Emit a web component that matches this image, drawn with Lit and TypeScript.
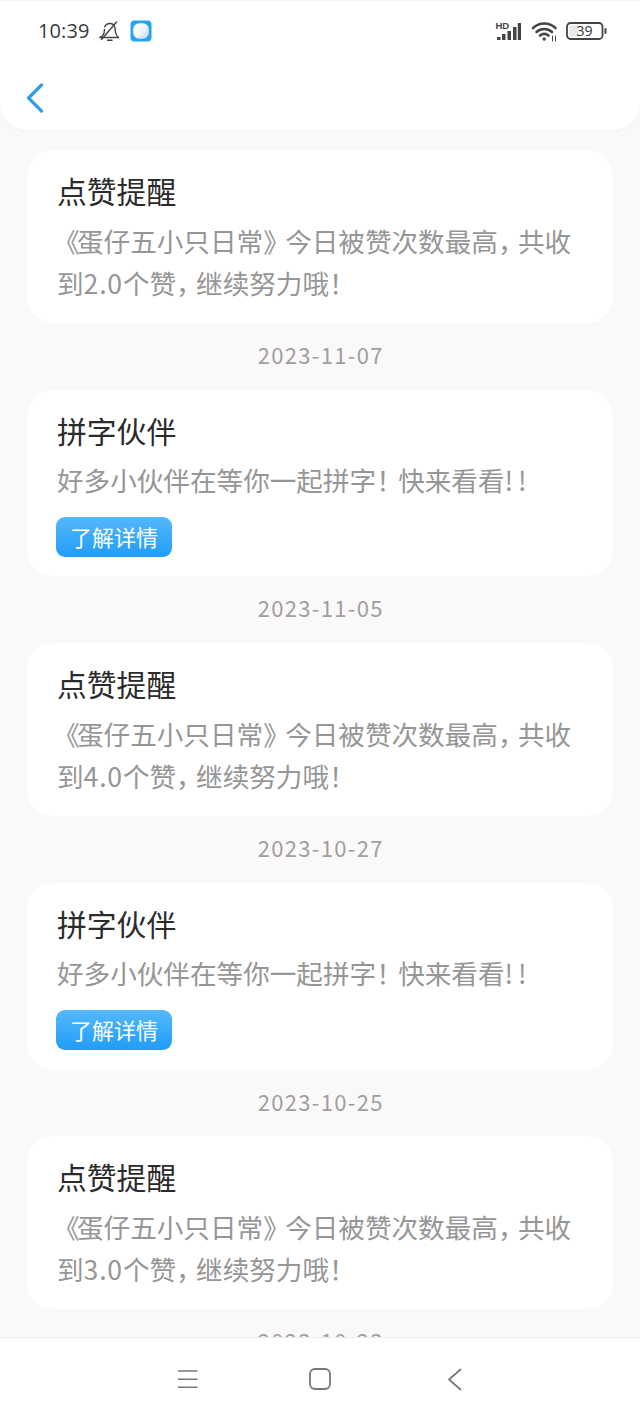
import { LitElement, html, css } from "lit";
import { customElement } from "lit/decorators.js";

type Item =
  | { kind: "like"; count: string; date?: string }
  | { kind: "pin"; date?: string };

const items: Item[] = [
  { kind: "like", count: "2.0", date: "2023-11-07" },
  { kind: "pin", date: "2023-11-05" },
  { kind: "like", count: "4.0", date: "2023-10-27" },
  { kind: "pin", date: "2023-10-25" },
  { kind: "like", count: "3.0", date: "2023-10-23" },
];

@customElement("app-root")
export class AppRoot extends LitElement {
  static styles = css`
    :host {
      display: block;
      width: 640px;
      height: 1422px;
      overflow: hidden;
      background: #fbf8f9;
      font-family: "Noto Sans CJK SC", "Noto Sans", sans-serif;
    }
    .page {
      height: 1422px;
      display: flex;
      flex-direction: column;
    }
    .header {
      height: 129px;
      flex: none;
      background: #fff;
      border-top: 1px solid #f4f2f3;
      border-radius: 0 0 26px 26px;
      box-shadow: 0 1px 3px rgba(0, 0, 0, 0.03);
      display: flex;
      flex-direction: column;
      position: relative;
      z-index: 1;
    }
    .status {
      height: 60px;
      display: flex;
      align-items: center;
      padding: 0 32px 0 38px;
    }
    .time {
      font-family: "Open Sans", sans-serif;
      font-size: 20px;
      letter-spacing: 0.1px;
      color: #3a3a3a;
      width: 61px;
      padding-bottom: 2px;
    }
    .bell {
      width: 22px;
      height: 22px;
      margin-right: 9px;
    }
    .appicon {
      width: 22px;
      height: 22px;
    }
    .spacer {
      flex: 1;
    }
    .signal {
      width: 26px;
      height: 22px;
      margin-right: 10px;
    }
    .wifi {
      width: 27px;
      height: 22px;
      margin-right: 8px;
    }
    .battery {
      width: 42px;
      height: 22px;
    }
    .batt-text {
      font-family: "Open Sans", sans-serif;
      font-size: 14px;
      fill: #333;
    }
    .back {
      width: 18px;
      height: 30px;
      margin: 22px 0 0 26px;
      display: block;
    }
    .main {
      flex: 1;
      min-height: 0;
      overflow: hidden;
      padding: 20px 27px 0;
      display: flex;
      flex-direction: column;
    }
    .card {
      flex: none;
      background: #fff;
      border-radius: 26px;
      padding: 19px 30px 19.5px;
    }
    .card.pin {
      padding-bottom: 19.1px;
    }
    .title {
      font-size: 29.8px;
      line-height: 42px;
      color: #2b2b2b;
      white-space: nowrap;
    }
    .body {
      margin-top: 8.5px;
      font-size: 26.6px;
      line-height: 42px;
      color: #969696;
      white-space: nowrap;
    }
    .open {
      margin-left: -4px;
      letter-spacing: -2.6px;
    }
    .close {
      letter-spacing: -4.6px;
    }
    .comma {
      letter-spacing: -6.6px;
    }
    .bang {
      letter-spacing: -4.6px;
    }
    .num {
      letter-spacing: 0.8px;
    }
    .ascii {
      letter-spacing: 5px;
    }
    .btn {
      margin: 16px 0 0 -1px;
      width: 116px;
      height: 40px;
      border-radius: 9px;
      background: linear-gradient(180deg, #55b8fb 0%, #219cf8 100%);
      color: #fff;
      font-size: 22px;
      line-height: 38px;
      text-align: center;
    }
    .date {
      flex: none;
      box-sizing: border-box;
      height: 66.8px;
      line-height: 62.8px;
      padding: 0 0 4px 1.5px;
      text-align: center;
      font-size: 22px;
      letter-spacing: 1.3px;
      color: #9f9f9f;
    }
    .nav {
      height: 84px;
      flex: none;
      background: #fff;
      border-top: 1px solid #ebe9ea;
      display: flex;
      align-items: center;
      justify-content: center;
      padding-left: 3px;
      position: relative;
      z-index: 1;
    }
    .nav svg {
      width: 24px;
      height: 24px;
      flex: none;
    }
    .nav .n1 {
      margin-right: 108px;
    }
    .nav .n3 {
      margin-left: 111px;
    }
  `;

  private card(item: Item) {
    return item.kind === "like"
      ? html`<div class="card">
          <div class="title">点赞提醒</div>
          <div class="body"><span class="open">《</span>蛋仔五小只日常<span class="close">》</span>今日被赞次数最高<span class="comma">，</span>共收<br />到<span class="num">${item.count}</span>个赞<span class="comma">，</span>继续努力哦<span class="bang">！</span></div>
        </div>`
      : html`<div class="card pin">
          <div class="title">拼字伙伴</div>
          <div class="body">好多小伙伴在等你一起拼字<span class="bang">！</span>快来看看<span class="ascii">!!</span></div>
          <div class="btn">了解详情</div>
        </div>`;
  }

  render() {
    return html`<div class="page">
      <div class="header">
        <div class="status">
          <span class="time">10:39</span>
          <svg class="bell" viewBox="0 0 22 22" fill="none" stroke="#444" stroke-width="1.4" stroke-linecap="round" stroke-linejoin="round">
            <path d="M1 17.5h18.5c-1.600-1.600-2.800-3-3-5.200l-.5-4.200c-.4-2.700-2.600-4.600-5.200-4.600-2.400 0-4.300 1.300-5.100 3.400" />
            <path d="M5.500 9.500l-.5 3.500c-.3 1.800-1.600 3.300-4 4.500" />
            <path d="M2.500 19.500L17.500 2" />
            <path d="M8.500 20.300h4.500" />
          </svg>
          <svg class="appicon" viewBox="0 0 22 22">
            <defs>
              <linearGradient id="ball" x1="0" y1="0" x2="1" y2="1">
                <stop offset="0" stop-color="#ffffff" />
                <stop offset="0.5" stop-color="#f4f8fd" />
                <stop offset="1" stop-color="#b9d2f2" />
              </linearGradient>
            </defs>
            <rect width="21" height="21" x="0.5" y="0.5" rx="4" fill="#22a4ee" />
            <rect x="3.2" y="3.2" width="15.6" height="15.6" rx="6" fill="url(#ball)" />
          </svg>
          <span class="spacer"></span>
          <svg class="signal" viewBox="0 0 26 22" fill="#444">
            <text x="0.5" y="8.5" font-size="9.5" font-weight="700" font-family="Liberation Sans, sans-serif">HD</text>
            <rect x="2" y="17" width="3.5" height="3" />
            <rect x="7" y="14" width="3.5" height="6" />
            <rect x="12.5" y="11" width="3.5" height="9" />
            <rect x="18" y="7" width="3.5" height="13" />
            <rect x="22.800" y="3" width="3.200" height="17" />
          </svg>
          <svg class="wifi" viewBox="0 0 27 22" fill="none" stroke="#444" stroke-width="2.6" stroke-linecap="round">
            <path d="M2 8c6.500-6 16-6 22.500 0" />
            <path d="M5.500 12c4.500-4 11-4 15.500 0" />
            <path d="M9 15.500c2.500-2 6-2 8.500 0" />
            <circle cx="13.200" cy="19" r="1.700" fill="#444" stroke="none" />
            <path d="M21.500 16v5M24.500 16v5" stroke-width="1" />
          </svg>
          <svg class="battery" viewBox="0 0 42 22">
            <rect x="1" y="3" width="35.500" height="16" rx="3.500" fill="#fff" stroke="#444" stroke-width="1.800" />
            <rect x="3.500" y="5.500" width="9" height="11" fill="#e8e8e8" />
            <rect x="38.500" y="8" width="2" height="6" rx="1" fill="#444" />
            <text class="batt-text" x="18.500" y="16" text-anchor="middle">39</text>
          </svg>
        </div>
        <svg class="back" viewBox="0 0 18 30" fill="none" stroke="#2f9fe8" stroke-width="3.2" stroke-linecap="round" stroke-linejoin="round">
          <path d="M15.500 2L2.500 15 15.500 28" />
        </svg>
      </div>
      <div class="main">
        ${items.map(
          (i) => html`${this.card(i)}${i.date ? html`<div class="date">${i.date}</div>` : ""}`
        )}
      </div>
      <div class="nav">
        <svg class="n1" viewBox="0 0 24 24" fill="none" stroke="#777" stroke-width="1.500">
          <path d="M2 3h19.500M2 11.300h19.500M2 19.300h19.500" />
        </svg>
        <svg class="n2" viewBox="0 0 24 24" fill="none" stroke="#777" stroke-width="1.800">
          <rect x="2" y="1" width="20" height="20" rx="5" />
        </svg>
        <svg class="n3" viewBox="0 0 24 24" fill="none" stroke="#777" stroke-width="1.700" stroke-linecap="round" stroke-linejoin="round">
          <path d="M17.500 1.500L6 11.500l11.500 10" />
        </svg>
      </div>
    </div>`;
  }
}
